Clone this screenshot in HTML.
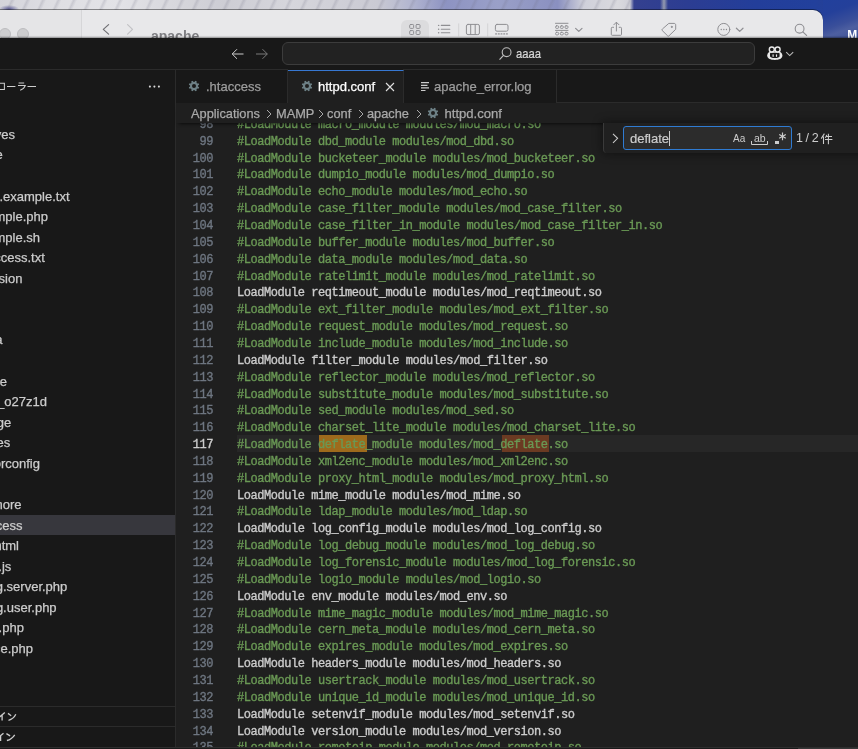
<!DOCTYPE html>
<html><head><meta charset="utf-8">
<style>
*{margin:0;padding:0;box-sizing:border-box}
html,body{width:858px;height:749px;overflow:hidden;background:#1f1f1f;font-family:"Liberation Sans",sans-serif}
#code,#side,#title,#tabs,#crumbs,#find,#finder{will-change:transform}
.abs{position:absolute}
#wall{position:absolute;left:0;top:0;width:858px;height:40px;
 background:
 radial-gradient(ellipse 10px 4px at 9px 9px,rgba(40,40,120,.7),rgba(40,40,120,0)),
 linear-gradient(90deg,rgba(0,0,0,0) 0px,rgba(0,0,0,0) 660px,rgba(230,230,200,.55) 664px,rgba(0,0,0,0) 668px),
 linear-gradient(90deg,#d4d4da 0%,#dedee3 6%,#e3e3e7 14%,#d8d8dd 20%,#cdcdd4 26%,#d6d6dc 34%,#cacad3 44%,#b2b5d0 48%,#8d93c2 52%,#9aa0c8 58%,#8a90c0 65%,#cfd0da 68%,#dadade 72%,#d0d0d8 73.4%,#34408f 73.9%,#2c3d92 80%,#233e9a 88%,#22409c 95%,#2d3f88 100%)}
#wall2{position:absolute;left:823px;top:0;width:35px;height:38px;background:linear-gradient(160deg,#22409c 0%,#24409a 30%,#3a4f9a 60%,#4d5fa0 75%,#3f5298 100%)}
#finder{position:absolute;left:-20px;top:10px;width:842.5px;height:40px;background:#e8e8ea;border-top-right-radius:10px;box-shadow:0 -1px 0 rgba(0,0,0,.42)}
#finder .side{position:absolute;left:0;top:0;width:102px;height:40px;background:#e5e5e7;border-right:1px solid #d6d6d8}
.tl{position:absolute;width:12px;height:12px;border-radius:50%;background:#cdcdcf;border:0.5px solid #bdbdc0}
#vsc{position:absolute;left:0;top:38px;width:858px;height:711px;background:#181818;box-shadow:0 -1px 1.5px rgba(0,0,0,.4)}
#title{position:absolute;left:0;top:0;width:858px;height:32px;background:#181818;border-bottom:1px solid #2b2b2b}
#cc{position:absolute;left:282px;top:4px;width:473px;height:23px;border:1px solid #3c3c3c;border-radius:6px;background:#222222}
#sidebar{position:absolute;left:0;top:32px;width:176px;height:679px;background:#181818;border-right:1px solid #2b2b2b}
.srow{position:absolute;left:0;width:175px;height:20.56px;color:#cccccc;font-size:13px}
.srow.sel{background:#37373d}
.srow span{position:absolute;top:2.6px;white-space:nowrap;-webkit-text-stroke:.25px}
.sech{position:absolute;left:0;width:175px;height:20.5px;border-top:1px solid #2b2b2b}
#editor{position:absolute;left:176px;top:32px;width:682px;height:679px;background:#1f1f1f}
#tabs{position:absolute;left:0;top:0;width:682px;height:33px;background:#181818;border-bottom:1px solid #2b2b2b}
.tab{position:absolute;top:0;height:33px;border-right:1px solid #2b2b2b;font-size:13px;color:#9d9d9d;background:#181818}
.tab.active{background:#1f1f1f;color:#ffffff;height:34px;border-top:1px solid #3778d2}
#crumbs{position:absolute;left:0;top:33px;width:682px;height:20px;background:#1f1f1f;font-size:12.8px;color:#a9a9a9;z-index:3;box-shadow:0 3px 4px -3px #000}
#code{position:absolute;left:0;top:0;width:858px;height:749px;font-family:"Liberation Mono",monospace;font-size:12px;letter-spacing:-0.45px;z-index:1;-webkit-text-stroke:0.35px}
.ln{position:absolute;left:176px;width:37px;text-align:right;height:16.85px;line-height:16.85px;color:#6e7681;white-space:pre}
.ln.act{color:#cccccc}
.cl{position:absolute;left:237px;height:16.85px;line-height:16.85px;white-space:pre;color:#cccccc}
.c{color:#6a9955}
.p{color:#cccccc}
.m1{}
.m2{}
#lhl{position:absolute;left:237px;top:434.8px;width:621px;height:17px;background:#272727}
#find{position:absolute;left:603px;top:123px;width:270px;height:30px;background:#202020;border-left:1px solid #3a3a3a;border-bottom-left-radius:4px;box-shadow:0 0 8px 2px rgba(0,0,0,.36);z-index:4}
#findin{position:absolute;left:19px;top:3px;width:169px;height:24px;border:1px solid #2f7bd2;border-radius:3px;background:#2c2c2c}
.tt{top:9px;white-space:nowrap;-webkit-text-stroke:.25px}
.ct{top:2.8px;white-space:nowrap;-webkit-text-stroke:.25px}
.chev{top:6px}
</style></head><body>
<div id="wall"></div>
<div id="wall2"></div>
<div class="abs" style="left:0;top:0;width:630px;height:10px;background:repeating-linear-gradient(115deg,rgba(255,255,255,0) 0px,rgba(255,255,255,0) 9px,rgba(110,110,130,.2) 11px,rgba(255,255,255,0) 14px)"></div>
<div id="finder">
 <div class="side"></div>
 <div class="tl" style="left:19px;top:18px"></div>
 <div class="tl" style="left:37px;top:18px"></div>
 <div class="abs" style="left:421px;top:10.2px;width:28px;height:30px;border-radius:6px;background:#dcdcde"></div>
 <div class="abs" style="left:171px;top:17.8px;font-size:14px;font-weight:bold;color:#7f7f83;white-space:nowrap">apache</div>
</div>
<svg class="abs" style="left:0;top:10px" width="823" height="28" viewBox="0 10 823 28">
 <g fill="none" stroke-linecap="round" stroke-linejoin="round">
 <path d="M108.6 24.6L103.3 29.4 108.6 34.1" stroke="#707074" stroke-width="1.2"/>
 <path d="M127.6 24.6L132.5 29.4 127.6 34.1" stroke="#c2c2c5" stroke-width="1.2"/>
 <g stroke="#8e8e92" stroke-width="1">
  <rect x="409.7" y="24.5" width="3.9" height="3.9" rx=".8"/><rect x="416.1" y="24.5" width="3.9" height="3.9" rx=".8"/>
  <rect x="409.7" y="30.6" width="3.9" height="3.9" rx=".8"/><rect x="416.1" y="30.6" width="3.9" height="3.9" rx=".8"/>
  <path d="M441.3 25.4H449.8M441.3 29.3H449.8M441.3 32.8H449.8" stroke-width="1.1"/>
  <path d="M438.6 25.4h.1M438.6 29.3h.1M438.6 32.8h.1" stroke-width="1.4"/>
  <rect x="466.4" y="24.4" width="13" height="10.2" rx="1.6"/><path d="M470.7 24.5V34.5M475.2 24.5V34.5"/>
  <rect x="495.4" y="24.4" width="12.6" height="6.8" rx="1.6"/>
  <path d="M495.7 33.9h.8M498.4 33.9h.8M501.1 33.9h.8M503.8 33.9h.8M506.5 33.9h.8" stroke-width="1.3"/>
  <path d="M555.5 23.3H568M555.5 30.4H568"/>
  <rect x="555.6" y="25.8" width="3" height="2.6" rx="1"/><rect x="560.3" y="25.8" width="3" height="2.6" rx="1"/><rect x="565" y="25.8" width="3" height="2.6" rx="1"/>
  <rect x="555.6" y="32.3" width="3" height="2.6" rx="1"/><rect x="560.3" y="32.3" width="3" height="2.6" rx="1"/><rect x="565" y="32.3" width="3" height="2.6" rx="1"/>
  <path d="M575.6 28.4L578.8 31.4 582 28.4" stroke-width="1.2"/>
  <path d="M613.6 27.3H612.2C611.6 27.3 611.3 27.6 611.3 28.2V34.4C611.3 35 611.6 35.3 612.2 35.3H620.6C621.2 35.3 621.5 35 621.5 34.4V28.2C621.5 27.6 621.2 27.3 620.6 27.3H619.2M616.4 31V22.4M613.8 24.8L616.4 22.2 619 24.8"/>
  <path d="M669.2 23.4H674C675.1 23.4 675.7 24 675.7 25.1V29.3L668.9 35.9Q668.3 36.4 667.7 35.9L662.1 30.4Q661.6 29.8 662.1 29.3Z"/><circle cx="671.7" cy="26.9" r=".55" fill="#8e8e92"/>
  <circle cx="723.8" cy="29.4" r="6"/>
  <path d="M721.2 29.5h.1M723.8 29.5h.1M726.4 29.5h.1" stroke-width="1.3"/>
  <path d="M736.4 28.2L739.7 31.4 743 28.2" stroke-width="1.2"/>
  <circle cx="799.6" cy="28.7" r="4.4" stroke-width="1.1"/><path d="M802.800 31.900L806.6 35.4" stroke-width="1.2"/>
  <path d="M458.7 23.8V36M487.7 23.8V36" stroke="#d3d3d6"/>
 </g></g>
</svg>
<div class="abs" style="left:847.2px;top:27.5px;font-size:12px;font-weight:bold;color:#ffffff">M</div>
<div id="vsc">
 <div id="title">
  <svg class="abs" style="left:229px;top:9px" width="18" height="14" viewBox="0 0 18 14"><path d="M14.5 7H3.2M8 2.2L3.2 7 8 11.8" fill="none" stroke="#cccccc" stroke-width="1"/></svg>
  <svg class="abs" style="left:253px;top:9px" width="18" height="14" viewBox="0 0 18 14"><path d="M3 7H14.3M9.5 2.2L14.3 7 9.5 11.8" fill="none" stroke="#7a7a7a" stroke-width="1"/></svg>
  <div id="cc">
   <svg class="abs" style="left:215px;top:3px" width="14" height="15" viewBox="0 0 14 15"><circle cx="8.6" cy="6.2" r="4.4" fill="none" stroke="#bdbdbd" stroke-width="1.1"/><path d="M5.5 9.3L1.5 13.6" stroke="#bdbdbd" stroke-width="1.1"/></svg>
   <div class="abs" style="left:233px;top:2.6px;font-size:13.4px;color:#d8d8d8;transform:scaleX(.84);transform-origin:0 0;-webkit-text-stroke:.2px">aaaa</div>
  </div>
  <svg class="abs" style="left:762px;top:4px" width="36" height="22" viewBox="762 42 36 22">
   <path d="M767.2 55.5C767.2 52.8 769.5 51.6 771 51.6H778.5C780 51.6 782.4 52.8 782.4 55.5C782.4 58.7 779 59.9 774.8 59.9C770.6 59.9 767.2 58.7 767.2 55.5Z" fill="#e8e8e8"/>
   <path d="M770 53.9C770 53.2 770.4 52.8 771 52.8H778.6C779.2 52.8 779.6 53.2 779.6 53.9V56.3C779.6 57.3 777.5 58.1 774.8 58.1C772.1 58.1 770 57.3 770 56.3Z" fill="#181818"/>
   <rect x="772.5" y="54.2" width="1.2" height="2.7" rx=".6" fill="#e8e8e8"/><rect x="775.9" y="54.2" width="1.2" height="2.7" rx=".6" fill="#e8e8e8"/>
   <circle cx="771.8" cy="49.5" r="2.5" fill="#181818" stroke="#e8e8e8" stroke-width="1.4"/>
   <circle cx="777.6" cy="49.5" r="2.5" fill="#181818" stroke="#e8e8e8" stroke-width="1.4"/>
  </svg>
  <svg class="abs" style="left:785px;top:13px" width="10" height="6" viewBox="0 0 10 6"><path d="M1.2 1.2L4.7 4.6 8.2 1.2" fill="none" stroke="#bbbbbb" stroke-width="1.1"/></svg>
 </div>
 <div id="sidebar"></div>
 <div id="editor">
  <div id="tabs">
   <div class="tab" style="left:0;width:112px"><span class="abs" style="left:12.4px;top:10.4px;line-height:0"><svg width="12" height="12" viewBox="0 0 12 12"><path fill="#6d8086" fill-rule="evenodd" d="M6.45 2.03 L7.15 0.83 L8.85 1.53 L8.49 2.87 L9.13 3.51 L10.47 3.15 L11.17 4.85 L9.97 5.55 L9.97 6.45 L11.17 7.15 L10.47 8.85 L9.13 8.49 L8.49 9.13 L8.85 10.47 L7.15 11.17 L6.45 9.97 L5.55 9.97 L4.85 11.17 L3.15 10.47 L3.51 9.13 L2.87 8.49 L1.53 8.85 L0.83 7.15 L2.03 6.45 L2.03 5.55 L0.83 4.85 L1.53 3.15 L2.87 3.51 L3.51 2.87 L3.15 1.53 L4.85 0.83 L5.55 2.03ZM4.00 6.00a2.0 2.0 0 1 0 4.00 0a2.0 2.0 0 1 0 -4.00 0Z"/></svg></span><span class="abs tt" style="left:30px">.htaccess</span></div>
   <div class="abs" style="left:112px;top:-1px;width:115px;height:1px;background:#181818"></div><div class="tab active" style="left:112px;width:116px"><span class="abs" style="left:12.6px;top:9.3px;line-height:0"><svg width="12" height="12" viewBox="0 0 12 12"><path fill="#6d8086" fill-rule="evenodd" d="M6.45 2.03 L7.15 0.83 L8.85 1.53 L8.49 2.87 L9.13 3.51 L10.47 3.15 L11.17 4.85 L9.97 5.55 L9.97 6.45 L11.17 7.15 L10.47 8.85 L9.13 8.49 L8.49 9.13 L8.85 10.47 L7.15 11.17 L6.45 9.97 L5.55 9.97 L4.85 11.17 L3.15 10.47 L3.51 9.13 L2.87 8.49 L1.53 8.85 L0.83 7.15 L2.03 6.45 L2.03 5.55 L0.83 4.85 L1.53 3.15 L2.87 3.51 L3.51 2.87 L3.15 1.53 L4.85 0.83 L5.55 2.03ZM4.00 6.00a2.0 2.0 0 1 0 4.00 0a2.0 2.0 0 1 0 -4.00 0Z"/></svg></span><span class="abs tt" style="left:30px;top:8px">httpd.conf</span>
    <svg class="abs" style="left:97px;top:11px" width="10" height="10" viewBox="0 0 10 10"><path d="M1 1L9 9M9 1L1 9" stroke="#e0e0e0" stroke-width="1.1"/></svg></div>
   <div class="tab" style="left:228px;width:153px"><svg class="abs" style="left:16.5px;top:11.7px" width="9" height="10" viewBox="0 0 9 10"><path d="M0 .7H8M0 3.3H6.5M0 5.9H8M0 8.5H4.5" stroke="#cccccc" stroke-width="1.2"/></svg><span class="abs tt" style="left:30px">apache_error.log</span></div>
  </div>
  <div id="crumbs">
   <span class="abs ct" style="left:15px">Applications</span>
   <svg class="abs chev" style="left:90px" width="6" height="10" viewBox="0 0 6 10"><path d="M1 1L5 5 1 9" fill="none" stroke="#a9a9a9" stroke-width="1"/></svg>
   <span class="abs ct" style="left:100px">MAMP</span>
   <svg class="abs chev" style="left:142px" width="6" height="10" viewBox="0 0 6 10"><path d="M1 1L5 5 1 9" fill="none" stroke="#a9a9a9" stroke-width="1"/></svg>
   <span class="abs ct" style="left:151px">conf</span>
   <svg class="abs chev" style="left:182px" width="6" height="10" viewBox="0 0 6 10"><path d="M1 1L5 5 1 9" fill="none" stroke="#a9a9a9" stroke-width="1"/></svg>
   <span class="abs ct" style="left:191px">apache</span>
   <svg class="abs chev" style="left:240px" width="6" height="10" viewBox="0 0 6 10"><path d="M1 1L5 5 1 9" fill="none" stroke="#a9a9a9" stroke-width="1"/></svg>
   <span class="abs" style="left:251.1px;top:3.9px;line-height:0"><svg width="12" height="12" viewBox="0 0 12 12"><path fill="#6d8086" fill-rule="evenodd" d="M6.45 2.03 L7.15 0.83 L8.85 1.53 L8.49 2.87 L9.13 3.51 L10.47 3.15 L11.17 4.85 L9.97 5.55 L9.97 6.45 L11.17 7.15 L10.47 8.85 L9.13 8.49 L8.49 9.13 L8.85 10.47 L7.15 11.17 L6.45 9.97 L5.55 9.97 L4.85 11.17 L3.15 10.47 L3.51 9.13 L2.87 8.49 L1.53 8.85 L0.83 7.15 L2.03 6.45 L2.03 5.55 L0.83 4.85 L1.53 3.15 L2.87 3.51 L3.51 2.87 L3.15 1.53 L4.85 0.83 L5.55 2.03ZM4.00 6.00a2.0 2.0 0 1 0 4.00 0a2.0 2.0 0 1 0 -4.00 0Z"/></svg></span>
   <span class="abs ct" style="left:268.5px;font-size:13.1px">httpd.conf</span>
  </div>
 </div>
</div>
<div id="lhl"></div>
<div class="abs" style="left:319px;top:435px;width:47.5px;height:17px;background:#9e6a1c"></div>
<div class="abs" style="left:501.5px;top:435px;width:47.5px;height:17px;background:#6b3a22"></div>
<div id="code">
<div class="ln" style="top:116.90px">98</div><div class="cl" style="top:116.90px"><span class="c">#LoadModule macro_module modules/mod_macro.so</span></div>
<div class="ln" style="top:133.75px">99</div><div class="cl" style="top:133.75px"><span class="c">#LoadModule dbd_module modules/mod_dbd.so</span></div>
<div class="ln" style="top:150.60px">100</div><div class="cl" style="top:150.60px"><span class="c">#LoadModule bucketeer_module modules/mod_bucketeer.so</span></div>
<div class="ln" style="top:167.45px">101</div><div class="cl" style="top:167.45px"><span class="c">#LoadModule dumpio_module modules/mod_dumpio.so</span></div>
<div class="ln" style="top:184.30px">102</div><div class="cl" style="top:184.30px"><span class="c">#LoadModule echo_module modules/mod_echo.so</span></div>
<div class="ln" style="top:201.15px">103</div><div class="cl" style="top:201.15px"><span class="c">#LoadModule case_filter_module modules/mod_case_filter.so</span></div>
<div class="ln" style="top:218.00px">104</div><div class="cl" style="top:218.00px"><span class="c">#LoadModule case_filter_in_module modules/mod_case_filter_in.so</span></div>
<div class="ln" style="top:234.85px">105</div><div class="cl" style="top:234.85px"><span class="c">#LoadModule buffer_module modules/mod_buffer.so</span></div>
<div class="ln" style="top:251.70px">106</div><div class="cl" style="top:251.70px"><span class="c">#LoadModule data_module modules/mod_data.so</span></div>
<div class="ln" style="top:268.55px">107</div><div class="cl" style="top:268.55px"><span class="c">#LoadModule ratelimit_module modules/mod_ratelimit.so</span></div>
<div class="ln" style="top:285.40px">108</div><div class="cl" style="top:285.40px"><span class="p">LoadModule reqtimeout_module modules/mod_reqtimeout.so</span></div>
<div class="ln" style="top:302.25px">109</div><div class="cl" style="top:302.25px"><span class="c">#LoadModule ext_filter_module modules/mod_ext_filter.so</span></div>
<div class="ln" style="top:319.10px">110</div><div class="cl" style="top:319.10px"><span class="c">#LoadModule request_module modules/mod_request.so</span></div>
<div class="ln" style="top:335.95px">111</div><div class="cl" style="top:335.95px"><span class="c">#LoadModule include_module modules/mod_include.so</span></div>
<div class="ln" style="top:352.80px">112</div><div class="cl" style="top:352.80px"><span class="p">LoadModule filter_module modules/mod_filter.so</span></div>
<div class="ln" style="top:369.65px">113</div><div class="cl" style="top:369.65px"><span class="c">#LoadModule reflector_module modules/mod_reflector.so</span></div>
<div class="ln" style="top:386.50px">114</div><div class="cl" style="top:386.50px"><span class="c">#LoadModule substitute_module modules/mod_substitute.so</span></div>
<div class="ln" style="top:403.35px">115</div><div class="cl" style="top:403.35px"><span class="c">#LoadModule sed_module modules/mod_sed.so</span></div>
<div class="ln" style="top:420.20px">116</div><div class="cl" style="top:420.20px"><span class="c">#LoadModule charset_lite_module modules/mod_charset_lite.so</span></div>
<div class="ln act" style="top:437.05px">117</div><div class="cl" style="top:437.05px"><span class="c">#LoadModule <span class="m1">deflate</span>_module modules/mod_<span class="m2">deflate</span>.so</span></div>
<div class="ln" style="top:453.90px">118</div><div class="cl" style="top:453.90px"><span class="c">#LoadModule xml2enc_module modules/mod_xml2enc.so</span></div>
<div class="ln" style="top:470.75px">119</div><div class="cl" style="top:470.75px"><span class="c">#LoadModule proxy_html_module modules/mod_proxy_html.so</span></div>
<div class="ln" style="top:487.60px">120</div><div class="cl" style="top:487.60px"><span class="p">LoadModule mime_module modules/mod_mime.so</span></div>
<div class="ln" style="top:504.45px">121</div><div class="cl" style="top:504.45px"><span class="c">#LoadModule ldap_module modules/mod_ldap.so</span></div>
<div class="ln" style="top:521.30px">122</div><div class="cl" style="top:521.30px"><span class="p">LoadModule log_config_module modules/mod_log_config.so</span></div>
<div class="ln" style="top:538.15px">123</div><div class="cl" style="top:538.15px"><span class="c">#LoadModule log_debug_module modules/mod_log_debug.so</span></div>
<div class="ln" style="top:555.00px">124</div><div class="cl" style="top:555.00px"><span class="c">#LoadModule log_forensic_module modules/mod_log_forensic.so</span></div>
<div class="ln" style="top:571.85px">125</div><div class="cl" style="top:571.85px"><span class="c">#LoadModule logio_module modules/mod_logio.so</span></div>
<div class="ln" style="top:588.70px">126</div><div class="cl" style="top:588.70px"><span class="p">LoadModule env_module modules/mod_env.so</span></div>
<div class="ln" style="top:605.55px">127</div><div class="cl" style="top:605.55px"><span class="c">#LoadModule mime_magic_module modules/mod_mime_magic.so</span></div>
<div class="ln" style="top:622.40px">128</div><div class="cl" style="top:622.40px"><span class="c">#LoadModule cern_meta_module modules/mod_cern_meta.so</span></div>
<div class="ln" style="top:639.25px">129</div><div class="cl" style="top:639.25px"><span class="c">#LoadModule expires_module modules/mod_expires.so</span></div>
<div class="ln" style="top:656.10px">130</div><div class="cl" style="top:656.10px"><span class="p">LoadModule headers_module modules/mod_headers.so</span></div>
<div class="ln" style="top:672.95px">131</div><div class="cl" style="top:672.95px"><span class="c">#LoadModule usertrack_module modules/mod_usertrack.so</span></div>
<div class="ln" style="top:689.80px">132</div><div class="cl" style="top:689.80px"><span class="c">#LoadModule unique_id_module modules/mod_unique_id.so</span></div>
<div class="ln" style="top:706.65px">133</div><div class="cl" style="top:706.65px"><span class="p">LoadModule setenvif_module modules/mod_setenvif.so</span></div>
<div class="ln" style="top:723.50px">134</div><div class="cl" style="top:723.50px"><span class="p">LoadModule version_module modules/mod_version.so</span></div>
<div class="ln" style="top:740.35px">135</div><div class="cl" style="top:740.35px"><span class="c">#LoadModule remoteip_module modules/mod_remoteip.so</span></div>
</div>
<div id="side" style="position:absolute;left:0;top:0;z-index:2">
<div class="srow" style="top:124.30px"><span style="right:160.0px">archives</span></div>
<div class="srow" style="top:144.86px"><span style="right:172.4px">site</span></div>
<div class="srow" style="top:185.98px"><span style="right:105.5px">version.example.txt</span></div>
<div class="srow" style="top:206.54px"><span style="right:127.0px">example.php</span></div>
<div class="srow" style="top:227.10px"><span style="right:135.0px">example.sh</span></div>
<div class="srow" style="top:247.66px"><span style="right:130.2px">access.txt</span></div>
<div class="srow" style="top:268.22px"><span style="right:152.6px">version</span></div>
<div class="srow" style="top:329.90px"><span style="right:172.4px">data</span></div>
<div class="srow" style="top:371.02px"><span style="right:168.0px">cache</span></div>
<div class="srow" style="top:391.58px"><span style="right:128.0px">tmp_o27z1d</span></div>
<div class="srow" style="top:412.14px"><span style="right:163.8px">storage</span></div>
<div class="srow" style="top:432.70px"><span style="right:164.8px">files</span></div>
<div class="srow" style="top:453.26px"><span style="right:135.0px">editorconfig</span></div>
<div class="srow" style="top:494.38px"><span style="right:153.5px">.gitignore</span></div>
<div class="srow sel" style="top:514.94px"><span style="right:152.6px">.htaccess</span></div>
<div class="srow" style="top:535.50px"><span style="right:156.0px">index.html</span></div>
<div class="srow" style="top:556.06px"><span style="right:163.7px">main.js</span></div>
<div class="srow" style="top:576.62px"><span style="right:107.7px">config.server.php</span></div>
<div class="srow" style="top:597.18px"><span style="right:118.4px">config.user.php</span></div>
<div class="srow" style="top:617.74px"><span style="right:151.1px">info.php</span></div>
<div class="srow" style="top:638.30px"><span style="right:142.0px">service.php</span></div>
<svg class="abs" style="left:0;top:80px" width="40" height="14" viewBox="0 80 40 14">
 <path d="M-1 83.2H4.4V89.5H-1M7 86.5H15.4M18.6 82.9H24.2M18 85.4H25.3C24.6 87.6 22.8 89.400 20.2 90.3M27.5 86.5H36" fill="none" stroke="#cccccc" stroke-width="1.05"/>
</svg>
<svg class="abs" style="left:145px;top:82px" width="18" height="9" viewBox="145 82 18 9"><circle cx="149.9" cy="86.6" r="1.05" fill="#d8d8d8"/><circle cx="154.4" cy="86.6" r="1.05" fill="#d8d8d8"/><circle cx="158.9" cy="86.6" r="1.05" fill="#d8d8d8"/></svg>
<div class="abs" style="left:0;top:706px;width:175px;height:1px;background:#2b2b2b"></div>
<div class="abs" style="left:0;top:726px;width:175px;height:1px;background:#2b2b2b"></div>
<svg class="abs" style="left:0;top:706px" width="24" height="40" viewBox="0 706 24 40">
 <path d="M-0.3 716.9L4.8 712.4M2.1 714.8V720.6M8 713.4L11.2 715.7M8.5 720.3C11.800 719.500 14.300 717.500 15.8 714.3" fill="none" stroke="#cccccc" stroke-width="1.3"/>
 <path d="M-1.5 737.300L3.5 733.2M0.6 735.300V741M6.4 733.6L10.100 735.900M6.9 740.5C10.200 739.700 12.700 737.900 14.700 734.8" fill="none" stroke="#cccccc" stroke-width="1.3"/>
</svg>
<div class="abs" style="left:0;top:747px;width:858px;height:1px;background:#2e2e2e"></div><div class="abs" style="left:0;top:748px;width:858px;height:1px;background:#1a1a1a"></div><div class="abs" style="left:798px;top:748px;width:60px;height:1px;background:#363636"></div>
</div>
<div id="find">
 <svg class="abs" style="left:8px;top:10px" width="7" height="11" viewBox="0 0 7 11"><path d="M1 .8L5.6 5.3 1 9.8" fill="none" stroke="#cccccc" stroke-width="1.05"/></svg>
 <div id="findin">
  <span class="abs" style="left:6px;top:3.5px;font-size:13px;color:#cccccc;-webkit-text-stroke:.2px">deflate</span>
  <div class="abs" style="left:45px;top:4px;width:1px;height:15px;background:#cccccc"></div>
  <span class="abs" style="left:109px;top:6px;font-size:10px;color:#cccccc">Aa</span>
  <span class="abs" style="left:130px;top:5px;font-size:10.5px;color:#cccccc">ab</span>
  <svg class="abs" style="left:127px;top:14px" width="17" height="5" viewBox="0 0 17 5"><path d="M.5 0V3.5H16.500V0" fill="none" stroke="#cccccc" stroke-width="1"/></svg>
  <div class="abs" style="left:150.5px;top:13.5px;width:4.2px;height:3.4px;background:#cccccc"></div>
  <svg class="abs" style="left:154px;top:5px" width="9" height="9" viewBox="0 0 9 9"><path d="M4.5 .6V8.2M1.2 2.5L7.8 6.3M1.2 6.3L7.8 2.5" fill="none" stroke="#cccccc" stroke-width="1.2"/></svg>
 </div>
 <span class="abs" style="left:192px;top:8px;font-size:12.5px;color:#cccccc;letter-spacing:-.4px">1 / 2</span>
 <svg class="abs" style="left:215px;top:9px" width="14" height="13" viewBox="819 132 14 13"><path d="M824.4 133.6L821.2 138.6M823.5 136.6V144M826.8 134.9L825.4 137.9M826.2 136.5H832M825 139.5H832.4M828.4 133.8V144.2" fill="none" stroke="#cccccc" stroke-width="1.05"/></svg>
</div>
</body></html>
